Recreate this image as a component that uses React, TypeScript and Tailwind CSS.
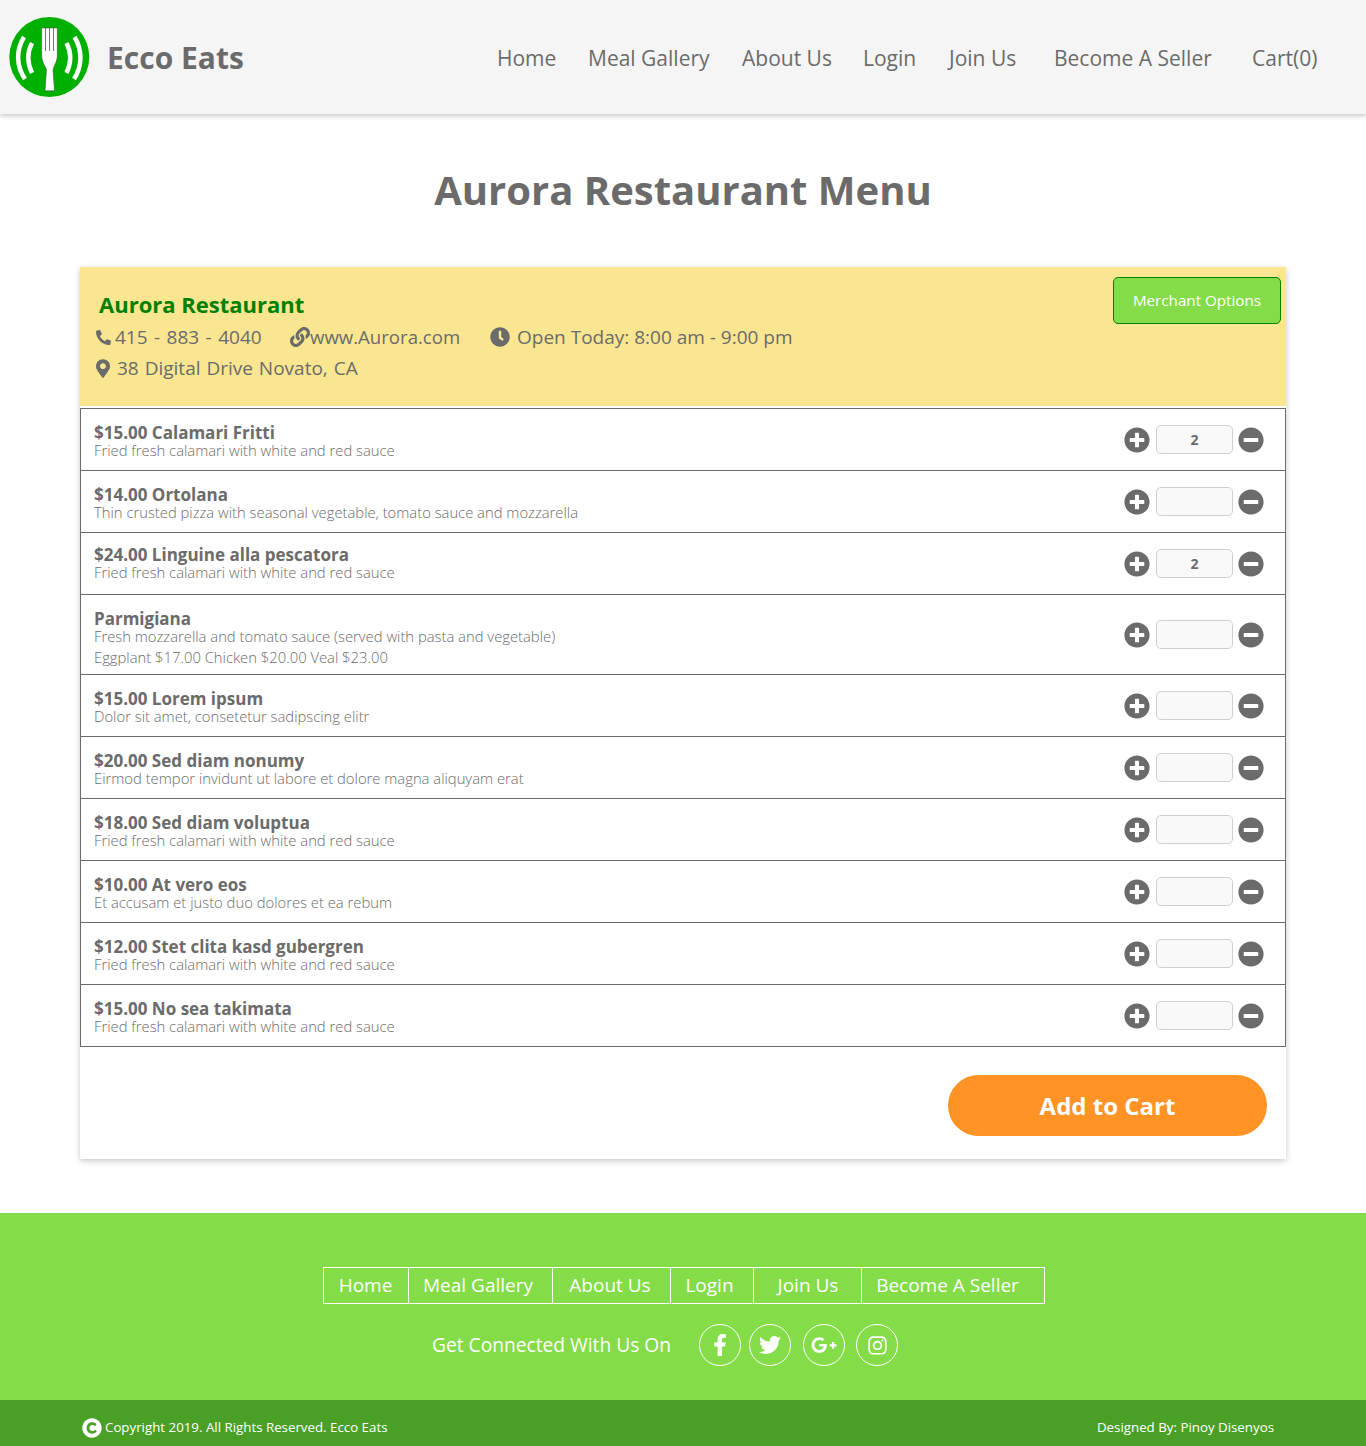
import { FaClock, FaCopyright, FaFacebookF, FaGooglePlusG, FaInstagram, FaLink, FaMapMarkerAlt, FaMinusCircle, FaPhone, FaPlusCircle, FaTwitter } from "react-icons/fa";

const headerLinks = [
  { label: "Home", cls: "w-[91px]" },
  { label: "Meal Gallery", cls: "w-[154px]" },
  { label: "About Us", cls: "w-[121px]" },
  { label: "Login", cls: "w-[86px]" },
  { label: "Join Us", cls: "w-[105px]" },
  { label: "Become A Seller", cls: "w-[198px]" },
  { label: "Cart(0)", cls: "w-[65px]" },
];

const footerLinks = [
  { label: "Home", cls: "w-[85px]" },
  { label: "Meal Gallery", cls: "w-[144px] pr-[4px]" },
  { label: "About Us", cls: "w-[118px] pr-[2px]" },
  { label: "Login", cls: "w-[83px] pr-[4px]" },
  { label: "Join Us", cls: "w-[108px] pl-[2px]" },
  { label: "Become A Seller", cls: "w-[182px] pr-[10px]" },
];

type MenuItem = {
  title: string;
  desc: string;
  extra?: string;
  qty?: number;
  pad?: string;
};

const items: MenuItem[] = [
  { title: "$15.00 Calamari Fritti", desc: "Fried fresh calamari with white and red sauce", qty: 2 },
  { title: "$14.00 Ortolana", desc: "Thin crusted pizza with seasonal vegetable, tomato sauce and mozzarella" },
  { title: "$24.00 Linguine alla pescatora", desc: "Fried fresh calamari with white and red sauce", qty: 2, pad: "pt-[4px] pb-[4px]" },
  {
    title: "Parmigiana",
    desc: "Fresh mozzarella and tomato sauce (served with pasta and vegetable)",
    extra: "Eggplant $17.00 Chicken $20.00 Veal $23.00",
    pad: "pt-[6px]",
  },
  { title: "$15.00 Lorem ipsum", desc: "Dolor sit amet, consetetur sadipscing elitr" },
  { title: "$20.00 Sed diam nonumy", desc: "Eirmod tempor invidunt ut labore et dolore magna aliquyam erat" },
  { title: "$18.00 Sed diam voluptua", desc: "Fried fresh calamari with white and red sauce" },
  { title: "$10.00 At vero eos", desc: "Et accusam et justo duo dolores et ea rebum" },
  { title: "$12.00 Stet clita kasd gubergren", desc: "Fried fresh calamari with white and red sauce" },
  { title: "$15.00 No sea takimata", desc: "Fried fresh calamari with white and red sauce" },
];

function Logo() {
  return (
    <svg viewBox="9 17 81 81" className="h-[81px] w-[81px] shrink-0">
      <circle cx="49.300" cy="57" r="40" fill="#00b000" />
      <path
        d="M41.700 28H57.300V55C57.300 62 54 65 53 70L54.500 90.700H45L46.500 70C45 65 41.700 62 41.700 55Z"
        fill="#fff"
        stroke="#444"
        strokeWidth="0.5"
      />
      <path d="M45.500 27.700V51M49.500 27.700V51M53.500 27.700V51" stroke="#555" strokeWidth="0.8" />
      <path d="M24 37C16 50 16 66 25 79" fill="none" stroke="#fff" strokeWidth="4.500" />
      <path d="M32 43C27.300 52 27.300 63 32 73" fill="none" stroke="#fff" strokeWidth="4.500" />
      <path d="M74.500 37C82.500 50 82.500 66 74 79" fill="none" stroke="#fff" strokeWidth="4.500" />
      <path d="M66.500 43C71.200 52 71.200 63 66.500 73" fill="none" stroke="#fff" strokeWidth="4.500" />
    </svg>
  );
}

function MenuRow({ item }: { item: MenuItem }) {
  return (
    <div className={`flex items-center justify-between border-b border-[#6b6b6b] pl-[13px] pr-[21px] last:h-[61px] last:border-b-0 ${item.extra ? "h-[80px]" : "h-[62px]"}`}>
      <div className={`text-[#6b6b6b] ${item.pad ?? "pt-[4px]"}`}>
        <div className="text-[17px] font-bold leading-[18px]">{item.title}</div>
        <div className="text-[14.800px] font-light leading-[17px]">{item.desc}</div>
        {item.extra && <div className="mt-[4px] text-[14.800px] font-light leading-[17px]">{item.extra}</div>}
      </div>
      <div className="flex items-center text-[#6b6b6b]">
        <FaPlusCircle className="h-[26px] w-[26px]" />
        <div className="ml-[6px] mr-[5px] flex h-[29px] w-[77px] items-center justify-center rounded-[5px] border border-[#cfcfcf] bg-[#f9f9f9] text-[14px] font-bold">
          {item.qty}
        </div>
        <FaMinusCircle className="h-[26px] w-[26px]" />
      </div>
    </div>
  );
}

export default function App() {
  return (
    <div className="min-h-[1446px] bg-white font-['Open_Sans','Noto_Sans',sans-serif] text-[#6b6b6b]">
      <header className="flex h-[114px] items-center bg-[#f5f5f5] pl-[9px] shadow-[0_2px_5px_rgba(0,0,0,0.22)]">
        <Logo />
        <span className="ml-[17px] w-[137px] whitespace-nowrap text-[30px] font-bold">Ecco Eats</span>
        <nav className="ml-[253px] flex pt-[4px] text-[21px]">
          {headerLinks.map((link) => (
            <a key={link.label} className={`${link.cls} whitespace-nowrap`}>
              {link.label}
            </a>
          ))}
        </nav>
      </header>

      <h1 className="mt-[46px] text-center text-[40px] font-bold leading-[60px]">Aurora Restaurant Menu</h1>

      <main className="mx-[80px] mt-[47px] h-[892px] shadow-[0_2px_6px_rgba(0,0,0,0.22)]">
        <section className="relative h-[139px] bg-[#fae690] pl-[16px] pt-[21px]">
          <h2 className="pl-[3px] text-[22px] font-bold leading-[32px] text-[#008000]">Aurora Restaurant</h2>
          <div className="mt-[2px] flex h-[30px] items-center text-[19px]">
            <FaPhone className="mr-[4px] h-[15px] w-[15px] -scale-x-100" />
            <span className="w-[147px] whitespace-nowrap [word-spacing:1.500px]">415 - 883 - 4040</span>
            <FaLink className="ml-[28px] h-[20px] w-[20px]" />
            <span className="w-[150px] whitespace-nowrap text-[18.600px]">www.Aurora.com</span>
            <FaClock className="ml-[30px] mr-[7px] h-[20px] w-[20px]" />
            <span>Open Today: 8:00 am - 9:00 pm</span>
          </div>
          <div className="mt-[1px] flex h-[30px] items-center text-[19px]">
            <FaMapMarkerAlt className="mr-[7px] h-[19px] w-[14px]" />
            <span className="[word-spacing:1px]">38 Digital Drive Novato, CA</span>
          </div>
          <button className="absolute right-[5px] top-[10px] h-[47px] w-[168px] rounded-[5px] border border-[#008000] bg-[#84dc48] text-[15.200px] text-white">
            Merchant Options
          </button>
        </section>

        <div className="mt-[2px] border border-[#6b6b6b]">
          {items.map((item) => (
            <MenuRow key={item.title} item={item} />
          ))}
        </div>

        <div className="mt-[28px] flex justify-end pr-[19px]">
          <button className="h-[61px] w-[319px] rounded-full bg-[#ff9326] text-[24px] font-bold text-white">
            Add to Cart
          </button>
        </div>
      </main>

      <footer className="mt-[54px] bg-[#84dc48] text-white">
        <div className="flex h-[187px] flex-col items-center pt-[54px]">
          <div className="ml-[1px] flex h-[37px] border border-white text-[19px]">
            {footerLinks.map((link) => (
              <a key={link.label} className={`${link.cls} flex items-center justify-center whitespace-nowrap border-r border-white last:border-r-0`}>
                {link.label}
              </a>
            ))}
          </div>
          <div className="mr-[36px] mt-[20px] flex items-center text-[19.200px]">
            <span className="mr-[28px] w-[239px] whitespace-nowrap">Get Connected With Us On</span>
            <div className="flex h-[42px] w-[42px] items-center justify-center rounded-full border border-white"><FaFacebookF className="h-[22px] w-[22px]" /></div>
            <div className="ml-[8px] flex h-[42px] w-[42px] items-center justify-center rounded-full border border-white"><FaTwitter className="h-[22px] w-[22px]" /></div>
            <div className="ml-[12px] flex h-[42px] w-[42px] items-center justify-center rounded-full border border-white"><FaGooglePlusG className="h-[26px] w-[26px]" /></div>
            <div className="ml-[11px] flex h-[42px] w-[42px] items-center justify-center rounded-full border border-white"><FaInstagram className="h-[21px] w-[21px]" /></div>
          </div>
        </div>
        <div className="flex h-[46px] items-center justify-between bg-[#4aa026] pl-[82px] pr-[92px] pt-[10px] text-[13.300px]">
          <div className="flex items-center">
            <FaCopyright className="mr-[3px] h-[20px] w-[20px]" />
            <span>Copyright 2019. All Rights Reserved. Ecco Eats</span>
          </div>
          <span>Designed By: Pinoy Disenyos</span>
        </div>
      </footer>
    </div>
  );
}
